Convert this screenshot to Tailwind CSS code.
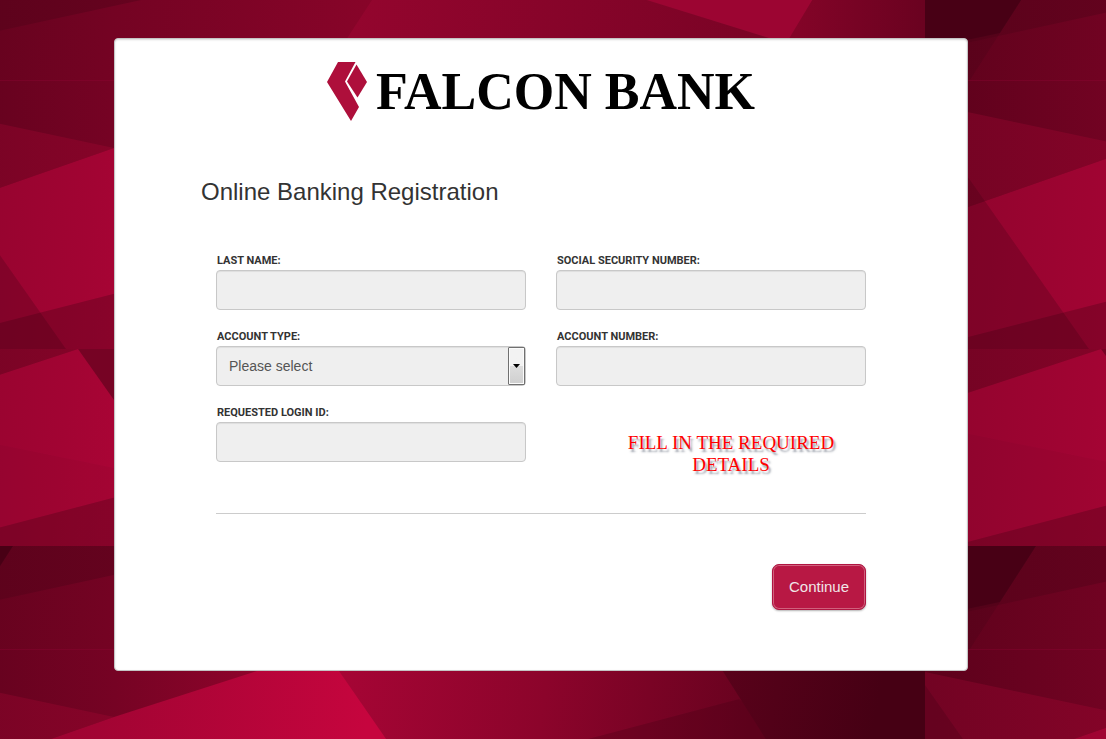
<!DOCTYPE html>
<html lang="en">
<head>
<meta charset="utf-8">
<meta name="viewport" content="width=device-width, initial-scale=1">
<title>Falcon Bank - Online Banking Registration</title>
<script src="https://cdn.jsdelivr.net/npm/@tailwindcss/browser@4"></script>
</head>
<body class="min-h-screen bg-[#6b0320] font-['Liberation_Sans',Arial,sans-serif] text-[#333333]">
<!-- Faceted backdrop, repeated as a tile -->
<svg class="fixed inset-0 -z-10 h-full w-full" aria-hidden="true">
  <defs>
    <linearGradient id="dark" gradientUnits="userSpaceOnUse" x1="0" y1="0" x2="470" y2="60">
      <stop offset="0" stop-color="#5c021b"/><stop offset=".45" stop-color="#740323"/><stop offset="1" stop-color="#880429"/>
    </linearGradient>
    <linearGradient id="edge" gradientUnits="userSpaceOnUse" x1="0" y1="0" x2="345" y2="0">
      <stop offset="0" stop-color="#58021a"/><stop offset="1" stop-color="#6c0321"/>
    </linearGradient>
    <linearGradient id="band" gradientUnits="userSpaceOnUse" x1="0" y1="0" x2="355" y2="0">
      <stop offset="0" stop-color="#5c011b"/><stop offset=".6" stop-color="#760324"/><stop offset="1" stop-color="#8e042b"/>
    </linearGradient>
    <linearGradient id="mid" gradientUnits="userSpaceOnUse" x1="0" y1="0" x2="230" y2="0">
      <stop offset="0" stop-color="#720323"/><stop offset="1" stop-color="#880429"/>
    </linearGradient>
    <linearGradient id="bright" gradientUnits="userSpaceOnUse" x1="0" y1="0" x2="480" y2="60">
      <stop offset="0" stop-color="#8a042b"/><stop offset=".45" stop-color="#a20433"/><stop offset="1" stop-color="#c6053e"/>
    </linearGradient>
    <linearGradient id="fade" gradientUnits="userSpaceOnUse" x1="440" y1="100" x2="850" y2="160">
      <stop offset="0" stop-color="#a60535"/><stop offset=".5" stop-color="#8c042b"/><stop offset="1" stop-color="#68021f"/>
    </linearGradient>
    <linearGradient id="night" gradientUnits="userSpaceOnUse" x1="800" y1="0" x2="1000" y2="40">
      <stop offset="0" stop-color="#5e021c"/><stop offset="1" stop-color="#460014"/>
    </linearGradient>
    <linearGradient id="top" gradientUnits="userSpaceOnUse" x1="445" y1="0" x2="880" y2="60">
      <stop offset="0" stop-color="#94052e"/><stop offset="1" stop-color="#790325"/>
    </linearGradient>
    <linearGradient id="topright" gradientUnits="userSpaceOnUse" x1="889" y1="0" x2="1023" y2="0">
      <stop offset="0" stop-color="#840428"/><stop offset="1" stop-color="#6a0220"/>
    </linearGradient>
    <pattern id="facets" patternUnits="userSpaceOnUse" x="-98" y="-23" width="1023" height="569">
      <rect width="1023" height="569" fill="url(#dark)"/>
      <polygon points="0,0 345,0 0,75" fill="url(#edge)"/>
      <polygon points="0,0 111,0 75,56 0,72" fill="#480015"/>
      <polygon points="75,56 0,72 0,103 45,103" fill="#000" fill-opacity=".08"/>
      <rect y="104" width="420" height="60" fill="url(#band)"/>
      <rect y="103" width="420" height="1" fill="#a0053a" fill-opacity=".25"/>
      <!-- upper wedge and its bright face -->
      <polygon points="0,126 212,171 0,245" fill="url(#mid)"/>
      <polygon points="212,171 355,125 520,72 520,372 0,372 0,245" fill="url(#bright)"/>
      <polygon points="0,139 164,372 0,372" fill="#3a0010" fill-opacity=".24"/>
      <polygon points="0,371 520,238 520,372 0,372" fill="#3a0010" fill-opacity=".28"/>
      <!-- lower face -->
      <rect y="372" width="1023" height="197" fill="#760324"/>
      <polygon points="0,372 176,372 0,430" fill="url(#mid)"/>
      <polygon points="0,430 176,372 315,569 0,569" fill="url(#bright)"/>
      <polygon points="0,448 242,497 315,569 0,569" fill="#3a0010" fill-opacity=".05"/>
      <polygon points="27,569 260,508 315,569" fill="#3a0010" fill-opacity=".28"/>
      <!-- right half -->
      <polygon points="484,0 1023,0 1023,372 608,372 437,125" fill="url(#fade)"/>
      <polygon points="470,23 486,0 1023,0 1023,100 420,100" fill="url(#top)"/>
      <polygon points="671,0 924,0 889,61 867,61" fill="#9c0532"/>
      <polygon points="924,0 1023,0 1023,100 864,100" fill="url(#topright)"/>
      <polygon points="686,193 837,153 900,193" fill="#3a0010" fill-opacity=".25"/>
      <polygon points="803,97 1023,97 1023,372 977,372" fill="url(#night)"/>
    </pattern>
  </defs>
  <rect width="100%" height="100%" fill="url(#facets)"/>
</svg>

<div class="pt-[38px] pr-6 pb-[68px]">
  <main class="mx-auto max-w-[854px] rounded-[4px] border border-[#c4c4c4] bg-white pt-[21px] pb-[60px] shadow-[inset_0_1px_2px_rgba(0,0,0,0.15)]">
    <header class="flex items-center justify-center gap-[9px]">
      <svg class="h-[60px] w-10 shrink-0" viewBox="0 0 40 60" aria-hidden="true">
        <path fill="#ae0f3b" d="M11 1H28.500L18 20.500L32 46L24 60L0 21Z"/>
        <path fill="#ae0f3b" d="M29.500 3.500L40 21L30.500 36.500L20 20.500Z"/>
      </svg>
      <p class="pt-[2px] font-['Liberation_Serif',serif] text-[52px] leading-[60px] font-bold whitespace-nowrap text-black">FALCON BANK</p>
    </header>

    <h1 class="mt-[55px] px-[86px] text-[24px] leading-[30px]">Online Banking Registration</h1>

    <form class="mt-[46px] px-[101px]" onsubmit="return false">
      <div class="grid grid-cols-2 gap-x-[30px] gap-y-[19px]">
        <div>
          <label for="last" class="mb-px block pl-px font-[Roboto,sans-serif] text-[11px] leading-4 font-bold">LAST NAME:</label>
          <input id="last" type="text" class="block h-10 w-full rounded-[4px] border border-[#c8c8c8] bg-[#efefef] px-3 text-[14px] shadow-[inset_0_1px_1px_rgba(0,0,0,0.075)]">
        </div>
        <div>
          <label for="ssn" class="mb-px block pl-px font-[Roboto,sans-serif] text-[11px] leading-4 font-bold">SOCIAL SECURITY NUMBER:</label>
          <input id="ssn" type="text" class="block h-10 w-full rounded-[4px] border border-[#c8c8c8] bg-[#efefef] px-3 text-[14px] shadow-[inset_0_1px_1px_rgba(0,0,0,0.075)]">
        </div>
        <div>
          <label for="type" class="mb-px block pl-px font-[Roboto,sans-serif] text-[11px] leading-4 font-bold">ACCOUNT TYPE:</label>
          <div class="relative">
            <select id="type" class="block h-10 w-full appearance-none rounded-[4px] border border-[#c8c8c8] bg-[#efefef] px-3 text-[14px] text-[#555555] shadow-[inset_0_1px_1px_rgba(0,0,0,0.075)]">
              <option>Please select</option>
            </select>
            <span class="pointer-events-none absolute inset-y-px right-px flex w-[17px] items-center justify-center rounded-[1px] border border-[#707070] bg-linear-to-b from-[#f2f2f2] from-50% via-[#dddddd] via-50% to-[#cfcfcf] shadow-[inset_0_0_0_1px_#fbfbfb]">
              <svg class="h-1 w-[7px]" viewBox="0 0 7 4" aria-hidden="true"><path d="M0 0H7L3.500 4Z"/></svg>
            </span>
          </div>
        </div>
        <div>
          <label for="number" class="mb-px block pl-px font-[Roboto,sans-serif] text-[11px] leading-4 font-bold">ACCOUNT NUMBER:</label>
          <input id="number" type="text" class="block h-10 w-full rounded-[4px] border border-[#c8c8c8] bg-[#efefef] px-3 text-[14px] shadow-[inset_0_1px_1px_rgba(0,0,0,0.075)]">
        </div>
        <div>
          <label for="login" class="mb-px block pl-px font-[Roboto,sans-serif] text-[11px] leading-4 font-bold">REQUESTED LOGIN ID:</label>
          <input id="login" type="text" class="block h-10 w-full rounded-[4px] border border-[#c8c8c8] bg-[#efefef] px-3 text-[14px] shadow-[inset_0_1px_1px_rgba(0,0,0,0.075)]">
        </div>
        <p class="pt-[27px] pl-10 text-center font-['Liberation_Serif',serif] text-[19px] leading-[22px] text-[#ff0000] [text-shadow:2px_3px_2px_rgba(60,70,90,0.5)]">FILL IN THE REQUIRED<br>DETAILS</p>
      </div>

      <hr class="mt-[37px] border-[#cccccc]">
      <div class="mt-[50px] flex justify-end">
        <button type="submit" class="h-[46px] rounded-[7px] border border-[#b01441] bg-[#b81844] px-4 text-[15px] text-[#f0e6e8] shadow-[inset_0_0_0_1px_#d0607c,0_1px_2px_rgba(0,0,0,0.3)]">Continue</button>
      </div>
    </form>
  </main>
</div>
</body>
</html>
